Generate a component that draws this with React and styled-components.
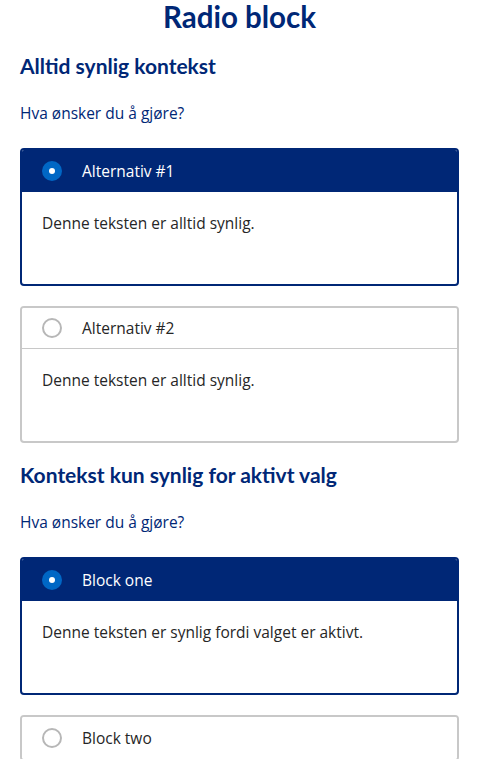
import React, { useState } from "react";
import styled, { createGlobalStyle } from "styled-components";

const GlobalStyle = createGlobalStyle`
  body {
    margin: 0;
    background: #fff;
    font-family: "Open Sans", Lato, sans-serif;
  }
`;

const Page = styled.div`
  padding: 0 20px;
`;

const Title = styled.h1`
  margin: 0;
  text-align: center;
  font-family: Lato, sans-serif;
  font-size: 29.5px;
  line-height: 34px;
  font-weight: 700;
  color: #002776;
`;

const Heading = styled.h2`
  margin: 18px 0 0;
  font-family: Lato, sans-serif;
  font-size: 21px;
  line-height: 28px;
  font-weight: 700;
  color: #002776;
`;

const Question = styled.p`
  margin: 23px 0 25px;
  font-size: 15.5px;
  line-height: 20px;
  color: #002776;
`;

const List = styled.div`
  display: flex;
  flex-direction: column;
  gap: 20px;
`;

const Card = styled.div`
  border: 2px solid ${(p) => (p.$active ? "#002776" : "#c8c8c8")};
  border-radius: 4px;
  overflow: hidden;
  background: #fff;
`;

const Header = styled.label`
  display: flex;
  align-items: center;
  gap: 20px;
  height: ${(p) => (p.$active || p.$last ? "42px" : "40px")};
  padding: 0 20px;
  cursor: pointer;
  background: ${(p) => (p.$active ? "#002776" : "#fff")};
  color: ${(p) => (p.$active ? "#fff" : "#262626")};
  font-size: 15.5px;
  border-bottom: ${(p) => (p.$active || p.$last ? "none" : "1px solid #c8c8c8")};
`;

const Radio = styled.span`
  box-sizing: border-box;
  width: 20px;
  height: 20px;
  border-radius: 50%;
  flex: none;
  display: flex;
  align-items: center;
  justify-content: center;
  background: ${(p) => (p.$checked ? "#0067c5" : "#fff")};
  border: ${(p) => (p.$checked ? "none" : "2px solid #b7b7b7")};

  &::after {
    content: "";
    display: ${(p) => (p.$checked ? "block" : "none")};
    width: 6px;
    height: 6px;
    border-radius: 50%;
    background: #fff;
  }
`;

const Body = styled.div`
  padding: 21px 20px 51px;
  font-size: 15.5px;
  line-height: 20px;
  color: #262626;
`;

const Option = ({ label, text, active, onSelect }) => (
  <Card $active={active}>
    <Header $active={active} $last={!text} onClick={onSelect}>
      <Radio $checked={active} />
      {label}
    </Header>
    {text && <Body>{text}</Body>}
  </Card>
);

export default function App() {
  const [first, setFirst] = useState(0);
  const [second, setSecond] = useState(0);

  return (
    <Page>
      <GlobalStyle />
      <Title>Radio block</Title>

      <Heading>Alltid synlig kontekst</Heading>
      <Question>Hva ønsker du å gjøre?</Question>
      <List>
        {["Alternativ #1", "Alternativ #2"].map((label, i) => (
          <Option
            key={label}
            label={label}
            text="Denne teksten er alltid synlig."
            active={first === i}
            onSelect={() => setFirst(i)}
          />
        ))}
      </List>

      <Heading>Kontekst kun synlig for aktivt valg</Heading>
      <Question>Hva ønsker du å gjøre?</Question>
      <List>
        {["Block one", "Block two"].map((label, i) => (
          <Option
            key={label}
            label={label}
            text={second === i ? "Denne teksten er synlig fordi valget er aktivt." : null}
            active={second === i}
            onSelect={() => setSecond(i)}
          />
        ))}
      </List>
    </Page>
  );
}
